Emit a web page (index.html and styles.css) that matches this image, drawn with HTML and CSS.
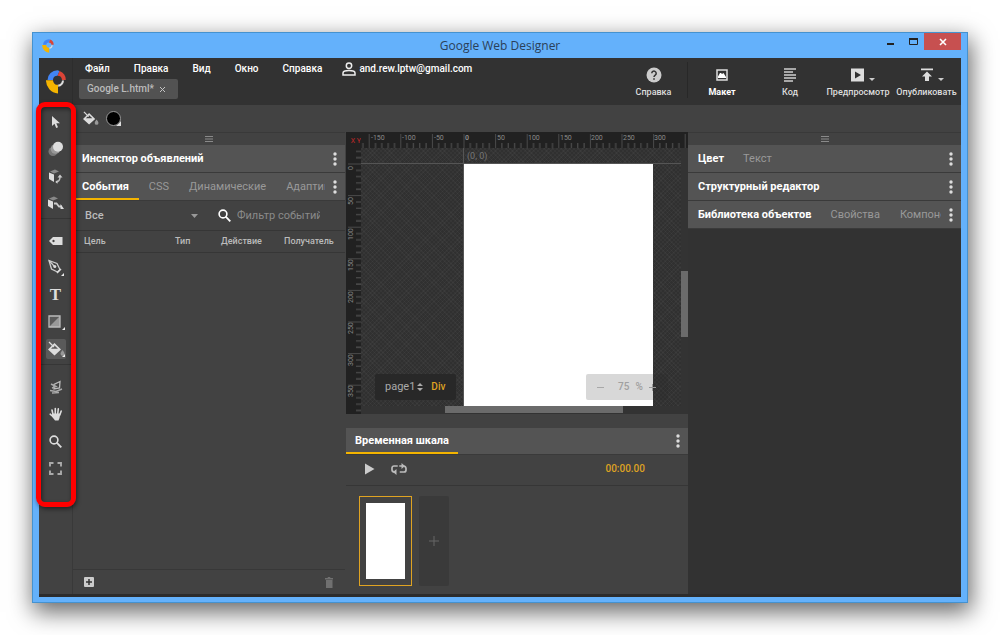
FILE: index.html
```html
<!DOCTYPE html>
<html lang="ru">
<head>
<meta charset="utf-8">
<title>Google Web Designer</title>
<link rel="stylesheet" href="styles.css">
</head>
<body>
<svg class="defs" aria-hidden="true">
  <symbol id="logo" viewBox="0 0 20 24">
    <path fill="#4285f4" d="M1.500 10A10 10 0 0 1 11.500.3L13.500 1 11.500 5.800A4.500 4.500 0 0 0 7 10z"/>
    <path fill="#db4437" d="M13.500 1A9.500 9.500 0 0 1 19.800 10H16A4.500 4.500 0 0 0 11.600 5.800z"/>
    <path fill="#dcdcdc" d="M18 10.500A6.500 6.500 0 0 1 12.200 16.800V14.600A4.500 4.500 0 0 0 16 10.500z"/>
    <path fill="#f4b400" d="M0 10.200H7A4.500 4.500 0 0 0 12 14.800V23.500A13 13 0 0 1 0 10.200z"/>
  </symbol>
  <symbol id="bucket" viewBox="0 0 18 16">
    <path fill="#ddd" d="M1 8.500 7.500 2l6.500 6.500-6.500 6zM4 7.800h7L7.500 4.400z" fill-rule="evenodd"/>
    <path d="M2 1l5 5" stroke="#ddd" stroke-width="1.300" fill="none"/>
    <path fill="#999" d="M15.500 9c1 1.500 2 2.500 2 3.700a2 2 0 0 1-4 0c0-1.200 1-2.200 2-3.700z"/>
  </symbol>
  <symbol id="dots" viewBox="0 0 4 14">
    <circle cx="2" cy="2" r="1.700"/><circle cx="2" cy="7" r="1.700"/><circle cx="2" cy="12" r="1.700"/>
  </symbol>
  <symbol id="grip" viewBox="0 0 8 6"><path d="M0 .5h8M0 3h8M0 5.500h8" stroke="#8a8a8a" stroke-width="1"/></symbol>
  <symbol id="search" viewBox="0 0 13 13">
    <circle cx="5" cy="5" r="3.900" fill="none" stroke="currentColor" stroke-width="1.600"/>
    <path d="M7.700 7.700l4.600 4.600" stroke="currentColor" stroke-width="1.900"/>
  </symbol>
</svg>

<div class="window">
  <header class="titlebar">
    <svg class="titlebar-logo"><use href="#logo"/></svg>
    <h1 class="titlebar-title">Google Web Designer</h1>
    <div class="window-controls">
      <button class="win-btn" aria-label="Свернуть"><svg width="8" height="8"><path d="M0 5h7v2H0z" fill="#222"/></svg></button>
      <button class="win-btn" aria-label="Развернуть"><svg width="9" height="7"><path d="M.5 1h8v5.500h-8z" fill="none" stroke="#222"/><path d="M0 0h9v2H0z" fill="#222"/></svg></button>
      <button class="win-btn win-close" aria-label="Закрыть"><svg width="8" height="8"><path d="M1 1l6 6M7 1L1 7" stroke="#fff" stroke-width="1.600"/></svg></button>
    </div>
  </header>

  <div class="app">
    <div class="topbar">
      <div class="brand"><svg class="brand-logo"><use href="#logo"/></svg></div>
      <div class="topbar-main">
        <nav class="menu">
          <button>Файл</button><button>Правка</button><button>Вид</button><button>Окно</button><button>Справка</button>
          <button class="account">
            <svg width="14" height="14" viewBox="0 0 14 14"><circle cx="7" cy="3.700" r="2.700" fill="none" stroke="#eee" stroke-width="1.500"/><path d="M1 13v-2c0-1.500 3-2.500 6-2.500s6 1 6 2.500v2z" fill="none" stroke="#eee" stroke-width="1.500"/></svg>
            and.rew.lptw@gmail.com
          </button>
        </nav>
        <div class="file-tab"><span>Google L.html*</span><button class="tab-close" aria-label="Закрыть файл"><svg width="5" height="5"><path d="M0 0l5 5M5 0L0 5" stroke="#c4c4c4"/></svg></button></div>
      </div>
      <div class="actions">
        <button class="action"><svg width="16" height="16"><circle cx="8" cy="8" r="7.500" fill="#ccc"/><path d="M5.800 6.300a2.200 2.200 0 1 1 3.600 1.700C8.500 8.700 8 9 8 10" fill="none" stroke="#323232" stroke-width="1.500"/><path d="M7.200 11.200h1.600v1.600H7.200z" fill="#323232"/></svg>Справка</button>
        <button class="action action-on"><svg width="12" height="16"><path d="M1 3h10v10H1z" fill="none" stroke="#ddd" stroke-width="1.500"/><path d="M2 11V9.500l2-3.500h1l1 1 1.500-1L10 10v1z" fill="#fff"/></svg>Макет</button>
        <button class="action"><svg width="13" height="16"><path d="M0 2h12M0 5h9M0 8h12M0 11h12M0 14h9" stroke="#d0d0d0" stroke-width="1.300"/></svg>Код</button>
        <button class="action action-drop"><svg width="26" height="16"><path d="M2 1.500h13v13H2zM6 4.500v7l6-3.500z" fill="#ddd" fill-rule="evenodd"/><path d="M20 11h6l-3 3z" fill="#ccc"/></svg>Предпросмотр</button>
        <button class="action action-drop"><svg width="26" height="16"><path d="M3 1.500h12v1.800H3zM9 4.500l5 5h-3V14H7V9.500H4z" fill="#ddd"/><path d="M20 11h6l-3 3z" fill="#ccc"/></svg>Опубликовать</button>
      </div>
    </div>

    <div class="body">
      <aside class="rail">
        <button class="tool" aria-label="Выделение"><svg width="10" height="14"><path d="M1 1v10l2.500-2.200L5.200 13l1.800-.7L5.300 8.200H9z" fill="#ddd"/></svg></button>
        <button class="tool" aria-label="Движение"><svg width="16" height="16"><circle cx="5" cy="10.500" r="4.500" fill="#777"/><circle cx="7.500" cy="8" r="4.800" fill="#999"/><circle cx="10" cy="5.800" r="5" fill="#ddd"/></svg></button>
        <button class="tool" aria-label="Поворот 3D"><svg width="15" height="15"><path d="M2 2.500L7 .5l4 2-5 2z" fill="#888"/><path d="M1 3.500l5 2v7.500l-5-3z" fill="#ddd"/><path d="M8 13c3.500-.5 4-2.500 4-5" fill="none" stroke="#bbb" stroke-width="1.500"/><path d="M9.500 8.500L12 5.500l2.500 3zM9.500 11v3.800L7.300 13z" fill="#ccc"/></svg></button>
        <button class="tool" aria-label="Перемещение 3D"><svg width="17" height="14"><path d="M2 2.500L7 .5l4 2-5 2z" fill="#888"/><path d="M1 3.500l5 2v7.500l-5-3z" fill="#ddd"/><path d="M7 7.500h2.500l2.500 3h3" fill="none" stroke="#ccc" stroke-width="1.800"/><path d="M13.500 8v5h3.500z" fill="#ddd"/></svg></button>
        <hr class="rail-line">
        <button class="tool" aria-label="Тег"><svg width="14" height="10"><path d="M0 5l4-4h9.500v8H4zM4.500 3.800a1.200 1.200 0 1 0 .01 0z" fill="#ddd" fill-rule="evenodd"/></svg></button>
        <button class="tool" aria-label="Перо"><svg width="17" height="18"><path d="M2 1.500l8 3 3 6-2.500 2.500-6-3z" fill="none" stroke="#ccc" stroke-width="1.300"/><path d="M2 1.500l5.500 6" stroke="#ccc" stroke-width="1.200"/><circle cx="7.800" cy="7.600" r="1.500" fill="#ddd"/><path d="M14 10l-4 4" stroke="#ddd" stroke-width="1.500"/><path d="M17 14v3h-3z" fill="#eee"/></svg></button>
        <button class="tool tool-text" aria-label="Текст">T</button>
        <button class="tool" aria-label="Фигура"><svg width="18" height="16"><path d="M2 2h11v11H2z" fill="#5a5a5a"/><path d="M13 2v11H2z" fill="#999"/><path d="M2 2h11v11H2z" fill="none" stroke="#bbb" stroke-width="1.300"/><path d="M18 13v3h-3z" fill="#eee"/></svg></button>
        <button class="tool tool-on" aria-label="Заливка"><svg width="18" height="16"><use href="#bucket"/><path d="M18 13v3h-3z" fill="#eee"/></svg></button>
        <hr class="rail-line">
        <button class="tool" aria-label="Вращение сцены"><svg width="14" height="14"><path d="M11 1.500L5 4.500v4.500l5.500-1z" fill="none" stroke="#bbb" stroke-width="1.300"/><path d="M2 4l5 2.500L3 8M1 10.500l6 1L13 9M3 13l7-.5" fill="none" stroke="#aaa" stroke-width="1.500"/></svg></button>
        <button class="tool" aria-label="Рука"><svg width="14" height="14" viewBox="0 0 14 14"><path d="M4 7.500L3 3M6.300 7V1.500M8.700 7L9.300 1.800M10.800 8l1.400-4M5 10.500L1.200 7.200" stroke="#ddd" stroke-width="1.600" stroke-linecap="round"/><path d="M3.300 6.500h8L10.500 11l-1 2.500H6L3 9.500z" fill="#ddd"/></svg></button>
        <button class="tool tool-zoom" aria-label="Масштаб"><svg width="13" height="13"><use href="#search"/></svg></button>
        <button class="tool" aria-label="По размеру"><svg width="13" height="13"><path d="M1 4.500V1h3.500M8.500 1H12v3.500M12 8.500V12H8.500M4.500 12H1V8.500" fill="none" stroke="#aaa" stroke-width="1.900"/></svg></button>
        <div class="highlight"></div>
      </aside>

      <main class="main">
        <div class="options">
          <svg width="17" height="15"><use href="#bucket"/></svg>
          <button class="swatch" aria-label="Цвет заливки"><svg width="16" height="16"><path d="M10 15h5v-5z" fill="#ddd"/><circle cx="7.500" cy="7.500" r="7" fill="#000" stroke="#999"/></svg></button>
        </div>

        <div class="workspace">
          <section class="panel panel-left">
            <div class="grip"><svg width="8" height="6"><use href="#grip"/></svg></div>
            <div class="bar"><button class="bar-tab on">Инспектор объявлений</button><button class="more" aria-label="Ещё"><svg><use href="#dots"/></svg></button></div>
            <div class="bar">
              <div class="bar-tabs"><button class="bar-tab on lined">События</button><button class="bar-tab">CSS</button><button class="bar-tab">Динамические</button><button class="bar-tab">Адаптивный</button></div>
              <button class="more" aria-label="Ещё"><svg><use href="#dots"/></svg></button>
            </div>
            <div class="filter">
              <label class="filter-kind"><select aria-label="Тип событий"><option>Все</option></select><svg width="7" height="4"><path d="M0 0h7L3.500 4z" fill="#999"/></svg></label>
              <label class="filter-text"><svg width="13" height="13"><use href="#search"/></svg><input type="text" aria-label="Фильтр событий" placeholder="Фильтр событий"></label>
            </div>
            <table class="events"><thead><tr><th class="c-target">Цель</th><th class="c-type">Тип</th><th class="c-act">Действие</th><th>Получатель</th></tr></thead></table>
            <div class="panel-foot">
              <button aria-label="Добавить"><svg width="10" height="10"><rect width="10" height="10" rx="1" fill="#ccc"/><path d="M5 2v6M2 5h6" stroke="#333" stroke-width="1.500"/></svg></button>
              <button aria-label="Удалить"><svg width="8" height="11"><path d="M0 1h2.500l.5-1h2l.5 1H8v1.500H0zM1 3h6.500v8H1z" fill="#707070"/></svg></button>
            </div>
          </section>

          <section class="center">
            <div class="stage">
              <div class="ruler-corner">X Y</div>
              <svg class="ruler-h" aria-hidden="true">
                <defs><pattern id="th" x="102.500" width="31.600" height="16" patternUnits="userSpaceOnUse"><path d="M.5 2v14" stroke="#4a4a4a"/><path d="M6.800 11v5M13.100 11v5M19.500 11v5M25.800 11v5" stroke="#555"/></pattern></defs>
                <rect width="100%" height="16" fill="url(#th)"/>
                <g class="ruler-labels"><text x="10" y="8">-150</text><text x="41" y="8">-100</text><text x="73" y="8">-50</text><text class="zero" x="104" y="8">0</text><text x="136" y="8">50</text><text x="167" y="8">100</text><text x="199" y="8">150</text><text x="230" y="8">200</text><text x="262" y="8">250</text><text x="293" y="8">300</text></g>
              </svg>
              <svg class="ruler-v" aria-hidden="true">
                <defs><pattern id="tv" y="15.500" width="16" height="31.600" patternUnits="userSpaceOnUse"><path d="M2 .5h14" stroke="#4a4a4a"/><path d="M10 6.800h6M10 13.100h6M10 19.500h6M10 25.800h6" stroke="#555"/></pattern></defs>
                <rect width="16" height="100%" fill="url(#tv)"/>
                <g class="ruler-labels"><text transform="translate(7 22) rotate(-90)">0</text><text transform="translate(7 57) rotate(-90)">50</text><text transform="translate(7 92) rotate(-90)">100</text><text transform="translate(7 123) rotate(-90)">150</text><text transform="translate(7 155) rotate(-90)">200</text><text transform="translate(7 186) rotate(-90)">250</text><text transform="translate(7 218) rotate(-90)">300</text><text transform="translate(7 249) rotate(-90)">350</text></g>
              </svg>
              <div class="canvas">
                <div class="guide-h"></div><div class="guide-v"></div>
                <span class="origin">(0, 0)</span>
                <div class="artboard"></div>
                <div class="crumbs"><button>page1 <svg width="6" height="8"><path d="M0 3h6L3 0zM0 5h6L3 8z" fill="#aaa"/></svg></button><button class="crumb-on">Div</button></div>
                <div class="zoom"><button aria-label="Уменьшить"><svg width="7" height="7"><path d="M0 3.500h7" stroke="#a8a8a8"/></svg></button><span class="zoom-value">75</span><span>%</span><button aria-label="Увеличить"><svg width="7" height="7"><path d="M0 3.500h7M3.500 0v7" stroke="#9a9a9a"/></svg></button></div>
              </div>
              <div class="scroll-v"><div class="thumb-v"></div></div>
              <div class="scroll-h"><div class="thumb-h"></div></div>
            </div>

            <div class="timeline">
              <div class="bar"><button class="bar-tab on lined">Временная шкала</button><button class="more" aria-label="Ещё"><svg><use href="#dots"/></svg></button></div>
              <div class="transport">
                <button aria-label="Воспроизвести"><svg width="10" height="12"><path d="M0 .5v11L9.500 6z" fill="#ccc"/></svg></button>
                <button aria-label="Повтор"><svg width="16" height="12"><path d="M8 9h5a2 2 0 0 0 2-2V5M8 3H3a2 2 0 0 0-2 2v2q0 2 3 2M8 3h4q3 0 3 2.500" fill="none" stroke="#bbb" stroke-width="1.700"/><path d="M10.500 0v6l3.500-3zM5.500 6v6L2 9z" fill="#bbb"/><path d="M7.500 1.500v3M8 7.500v3" stroke="#424242" stroke-width="1.500"/></svg></button>
                <output class="time">00:00.00</output>
              </div>
              <div class="frames">
                <button class="frame" aria-label="Страница 1"><span class="frame-page"></span></button>
                <button class="frame-add" aria-label="Добавить страницу"><svg width="10" height="10"><path d="M5 0v10M0 5h10" stroke="#666"/></svg></button>
              </div>
            </div>
          </section>

          <section class="panel panel-right">
            <div class="grip"><svg width="8" height="6"><use href="#grip"/></svg></div>
            <div class="bar"><div class="bar-tabs"><button class="bar-tab on">Цвет</button><button class="bar-tab">Текст</button></div><button class="more" aria-label="Ещё"><svg><use href="#dots"/></svg></button></div>
            <div class="bar"><div class="bar-tabs"><button class="bar-tab on">Структурный редактор</button></div><button class="more" aria-label="Ещё"><svg><use href="#dots"/></svg></button></div>
            <div class="bar"><div class="bar-tabs"><button class="bar-tab on">Библиотека объектов</button><button class="bar-tab">Свойства</button><button class="bar-tab">Компоненты</button></div><button class="more" aria-label="Ещё"><svg><use href="#dots"/></svg></button></div>
          </section>
        </div>
      </main>
    </div>
  </div>
</div>
</body>
</html>
```
FILE: styles.css
```css
* { box-sizing: border-box; }

body {
  margin: 0;
  height: 100vh;
  padding: 32px;
  background: #fff;
  color: #ddd;
  font: 11px/14px Roboto, "Noto Sans", sans-serif;
  overflow: hidden;
}

button, input, select {
  margin: 0;
  padding: 0;
  border: 0;
  background: none;
  color: inherit;
  font: inherit;
}

svg { display: block; flex: none; }
.defs { position: absolute; width: 0; height: 0; }

/* Window frame */
.window {
  display: flex;
  flex-direction: column;
  height: 100%;
  padding: 0 6px 5px;
  border: 1px solid #4592cf;
  background: #64b1fb;
  box-shadow: 2px 8px 22px 1px rgba(0, 0, 0, .6);
}

.titlebar {
  display: grid;
  grid-template-columns: 1fr auto 1fr;
  align-items: center;
  height: 25px;
  flex: none;
}
.titlebar-logo { width: 12px; height: 14px; margin-left: 3px; }
.titlebar-title { margin: 0; color: #2b4058; font: 12px/16px "Open Sans", sans-serif; }
.window-controls { display: flex; justify-content: flex-end; align-self: start; }
.win-btn { display: flex; align-items: center; justify-content: center; width: 22px; height: 17px; }
.win-close { width: 37px; background: #c75050; }

.app {
  display: flex;
  flex-direction: column;
  flex: 1;
  min-height: 0;
  border-bottom: 3px solid #2c2c2c;
  background: #424242;
}

/* Top bar */
.topbar { display: flex; height: 47px; flex: none; background: #323232; }
.brand { display: flex; justify-content: center; align-items: center; width: 34px; border-right: 1px solid #2d2d2d; }
.brand-logo { width: 20px; height: 24px; }
.topbar-main { flex: 1; padding: 3px 0 0 6px; }
.menu { display: flex; align-items: center; gap: 24px; height: 15px; padding-left: 6px; color: #fff; font-weight: 500; font-size: 10px; white-space: nowrap; }
.account { display: flex; align-items: center; gap: 3px; margin-left: -4px; }
.file-tab {
  display: inline-flex;
  align-items: center;
  gap: 6px;
  height: 20px;
  margin-top: 3px;
  padding: 0 13px 0 8px;
  border-radius: 2px;
  background: #525252;
  color: #bbb;
  font-size: 10px;
  font-weight: 500;
}
.actions { display: flex; color: #ddd; font-size: 9px; line-height: 12px; font-weight: 500; }
.action { display: flex; flex-direction: column; align-items: center; gap: 3px; width: 68px; padding-top: 9px; }
.action:first-child { border-right: 1px solid; border-image: linear-gradient(transparent 5px, #282828 5px, #282828 39px, transparent 39px) 1; }
.action-on { color: #fff; font-weight: 700; }
.action-drop svg { margin-left: 8px; }
.action:last-child { width: 69px; }

/* Tool rail */
.body { display: flex; flex: 1; min-height: 0; }
.rail { position: relative; display: flex; flex-direction: column; align-items: center; width: 34px; padding-top: 3px; border-right: 1px solid #393939; }
.tool { display: flex; align-items: center; justify-content: center; width: 20px; height: 20px; margin: 4px 0 3px; border-radius: 2px; flex: none; }
.tool-on { background: #5a5a5a; }
.tool-text { color: #ddd; font: bold 17px/20px "Liberation Serif", serif; }
.tool-zoom { color: #ddd; }
.rail-line { width: 100%; height: 1px; margin: 2px 0 8px; border: 0; background: #363636; flex: none; }
.highlight {
  position: absolute;
  z-index: 2;
  top: -3px;
  left: -3px;
  right: -4px;
  height: 405px;
  border: 5px solid #f00;
  border-radius: 9px;
  box-shadow: 1px 2px 4px rgba(0, 0, 0, .5), inset 1px 2px 4px rgba(0, 0, 0, .5);
  pointer-events: none;
}

.main { display: flex; flex-direction: column; flex: 1; min-width: 0; }
.options { display: flex; align-items: center; gap: 7px; height: 27px; padding-left: 9px; flex: none; }
.workspace { display: grid; grid-template-columns: 272px minmax(0, 1fr) 273px; flex: 1; min-height: 0; }

/* Panels */
.panel { display: flex; flex-direction: column; min-width: 0; min-height: 0; }
.panel-left { border-top: 1px solid #393939; }
.panel-right { background: #323232; }
.panel-right .grip { height: 13px; border-top: 1px solid #393939; }
.grip { display: flex; align-items: center; justify-content: center; height: 12px; flex: none; background: #424242; }
.bar { display: flex; justify-content: space-between; height: 28px; flex: none; border-bottom: 1px solid #3a3a3a; background: #545454; }
.bar-tabs { display: flex; flex: 1; min-width: 0; overflow: hidden; }
.bar-tab { flex: none; padding: 0 10px; border-bottom: 2px solid transparent; border-top: 2px solid transparent; color: #999; white-space: nowrap; }
.bar-tab.on { padding-left: 9px; color: #fff; font-weight: 700; }
.panel-right .bar-tab.on { padding-left: 10px; padding-right: 9px; }
.bar-tab.lined { border-bottom-color: #f4b400; }
.more { width: 20px; flex: none; }
.more svg { width: 4px; height: 14px; margin: 0 auto; fill: #ddd; }

.filter { display: flex; align-items: center; height: 30px; flex: none; border-bottom: 1px solid #363636; }
.filter-kind { display: flex; align-items: center; width: 125px; padding-left: 12px; }
.filter-kind select { flex: 1; appearance: none; color: #bbb; font-weight: 500; }
.filter-text { display: flex; align-items: center; gap: 6px; margin-left: 20px; color: #fff; }
.filter-text input { width: 83px; }
.filter-text input::placeholder { color: #8a8a8a; opacity: 1; }

.events { width: 100%; table-layout: fixed; border-collapse: collapse; border-bottom: 1px solid #363636; color: #bbb; font-size: 9px; line-height: 12px; }
.events th { height: 21px; padding: 0; font-weight: 500; text-align: left; }
.events .c-target { width: 102px; padding-left: 11px; }
.events .c-type { width: 46px; }
.events .c-act { width: 63px; }
.panel-foot { display: flex; align-items: center; justify-content: space-between; height: 25px; margin-top: auto; padding: 0 12px 0 11px; border-top: 1px solid #383838; }

/* Stage */
.center { display: flex; flex-direction: column; min-width: 0; padding-left: 1px; }
.stage { display: grid; grid-template: 16px minmax(0, 1fr) 8px / 15px minmax(0, 1fr) 7px; flex: 1; min-height: 0; background: #333; }
.ruler-corner { background: #212121; color: #c22828; font-size: 7px; line-height: 18px; text-align: right; white-space: nowrap; }
.ruler-h { grid-column: 2 / 4; width: 100%; height: 16px; background: #212121; }
.ruler-v { grid-row: 2 / 4; width: 15px; height: 100%; background: #212121; }
.ruler-labels { fill: #8a8a8a; font-size: 7px; }
.ruler-labels .zero { font-weight: 700; }
.canvas {
  position: relative;
  overflow: hidden;
  background:
    repeating-linear-gradient(45deg, transparent 0 2px, rgba(255, 255, 255, .03) 2px 3px),
    repeating-linear-gradient(-45deg, transparent 0 2px, rgba(255, 255, 255, .03) 2px 3px),
    #303030;
}
.guide-h { position: absolute; top: 15px; left: 0; right: 0; height: 1px; background: #555; }
.guide-v { position: absolute; top: 0; bottom: 0; left: 102px; width: 1px; background: #555; }
.origin { position: absolute; top: 1px; left: 106px; color: #777; font-size: 9px; }
.artboard { position: absolute; top: 16px; bottom: 0; left: 103px; width: 189px; background: #fff; }
.crumbs, .zoom { position: absolute; bottom: 6px; display: flex; align-items: center; height: 26px; border-radius: 2px; }
.crumbs { left: 14px; width: 81px; padding-left: 10px; gap: 8px; background: #282828; color: #aaa; }
.crumbs button { display: flex; align-items: center; gap: 2px; }
.crumbs .crumb-on { color: #dfa322; font-size: 10px; font-weight: 500; }
.zoom { right: 13px; width: 82px; padding: 0 11px; background: rgba(40, 40, 40, .18); color: #a0a0a0; font-size: 10px; font-weight: 500; gap: 6px; }
.zoom-value { margin-left: 8px; }
.scroll-v { grid-column: 3; grid-row: 2; padding-top: 123px; }
.thumb-v { height: 66px; background: #6b6b6b; }
.scroll-h { grid-column: 2 / 4; grid-row: 3; padding-left: 84px; }
.thumb-h { width: 178px; height: 7px; background: #6b6b6b; }

/* Timeline */
.timeline { flex: none; padding-top: 14px; background: #424242; }
.timeline .bar { height: 27px; }
.timeline .bar-tab { padding-right: 9px; }
.transport { display: flex; align-items: center; gap: 16px; height: 31px; padding: 0 43px 2px 19px; border-bottom: 1px solid #363636; }
.time { margin-left: auto; color: #dfa322; font-weight: 500; font-size: 10px; }
.frames { display: flex; gap: 7px; height: 108px; padding: 10px 0 8px 13px; }
.frame { display: flex; width: 53px; padding: 6px; border: 1px solid #dfa322; }
.frame-page { flex: 1; align-self: stretch; background: #fff; }
.frame-add { display: flex; align-items: center; justify-content: center; width: 30px; border-radius: 2px; background: #3a3a3a; }
```
